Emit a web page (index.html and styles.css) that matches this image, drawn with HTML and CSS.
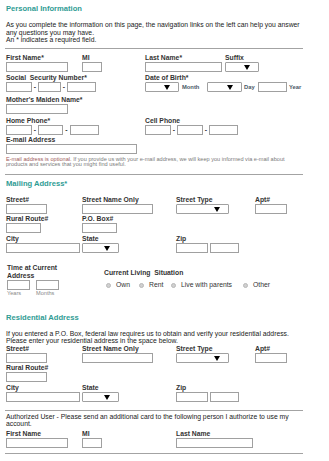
FILE: index.html
```html
<!DOCTYPE html>
<html lang="en">
<head>
  <meta charset="UTF-8">
  <meta name="viewport" content="width=device-width, initial-scale=1.0">
  <title>Personal Information</title>
  <link rel="stylesheet" href="styles.css">
</head>
<body>
  <div class="form-page">
    <h2 class="section-title">Personal Information</h2>
    <p class="intro">As you complete the information on this page, the navigation links on the left can help you answer<br>any questions you may have.<br>An * indicates a required field.</p>
    <hr class="rule rule-top">

    <!-- Nome -->
    <div class="row r-name">
      <div class="field col-a"><label>First Name*</label><input class="w62"></div>
      <div class="field col-b"><label>MI</label><input class="w20"></div>
      <div class="field col-c"><label>Last Name*</label><input class="w77"></div>
      <div class="field"><label>Suffix</label><div class="select w34"><i class="arrow"></i></div></div>
    </div>

    <div class="row r-ssn">
      <div class="field col-ab">
        <label>Social&nbsp; Security Number*</label>
        <div class="group">
          <input class="w26"><span class="dash">-</span><input class="w23"><span class="dash">-</span><input class="w29">
        </div>
      </div>
      <div class="field">
        <label>Date of Birth*</label>
        <div class="group">
          <div class="select w34"><i class="arrow"></i></div><span class="unit u-month">Month</span>
          <div class="select w35"><i class="arrow"></i></div><span class="unit u-day">Day</span>
          <input class="w29"><span class="unit u-year">Year</span>
        </div>
      </div>
    </div>

    <div class="row r-maiden">
      <div class="field"><label>Mother's Maiden Name*</label><input class="w62"></div>
    </div>

    <div class="row r-phone">
      <div class="field col-ab">
        <label>Home Phone*</label>
        <div class="group">
          <input class="w26"><span class="dash">-</span><input class="w25"><span class="dash d7">-</span><input class="w29">
        </div>
      </div>
      <div class="field">
        <label>Cell Phone</label>
        <div class="group">
          <input class="w26"><span class="dash">-</span><input class="w26"><span class="dash">-</span><input class="w29">
        </div>
      </div>
    </div>

    <div class="row r-email">
      <div class="field"><label>E-mail Address</label><input class="w131"></div>
    </div>
    <p class="note"><span class="note-lead">E-mail address is optional.</span> If you provide us with your e-mail address, we will keep you informed via e-mail about<br>products and services that you might find useful.</p>
    <hr class="rule rule-mail">

    <!-- Endereço de correspondência -->
    <h2 class="section-title t-mail">Mailing Address*</h2>
    <div class="row r-street">
      <div class="field col-a"><label>Street#</label><input class="w41"></div>
      <div class="field col-d"><label>Street Name Only</label><input class="w71"></div>
      <div class="field col-e"><label>Street Type</label><div class="select w53"><i class="arrow"></i></div></div>
      <div class="field"><label>Apt#</label><input class="w32"></div>
    </div>
    <div class="row r-rural">
      <div class="field col-a"><label>Rural Route#</label><input class="w35"></div>
      <div class="field"><label>P.O. Box#</label><input class="w35"></div>
    </div>
    <div class="row r-city">
      <div class="field col-a"><label>City</label><input class="w74"></div>
      <div class="field col-d"><label>State</label><div class="select w37"><i class="arrow"></i></div></div>
      <div class="field">
        <label>Zip</label>
        <div class="group zip"><input class="w32"><input class="w29"></div>
      </div>
    </div>

    <div class="row r-time">
      <div class="field col-time">
        <label class="two-line">Time at Current<br>Address</label>
        <div class="group years">
          <input class="w23"><input class="w23">
        </div>
        <div class="group hints"><span class="hint h-years">Years</span><span class="hint">Months</span></div>
      </div>
      <div class="field living">
        <label>Current Living&nbsp; Situation</label>
        <div class="radios">
          <span class="radio-opt o-own"><i class="radio"></i>Own</span>
          <span class="radio-opt o-rent"><i class="radio"></i>Rent</span>
          <span class="radio-opt o-live"><i class="radio"></i>Live with parents</span>
          <span class="radio-opt"><i class="radio"></i>Other</span>
        </div>
      </div>
    </div>

    <!-- Endereço residencial -->
    <h2 class="section-title t-res">Residential Address</h2>
    <p class="intro res-text">If you entered a P.O. Box, federal law requires us to obtain and verify your residential address.<br>Please enter your residential address in the space below.</p>
    <div class="row r-street2">
      <div class="field col-a"><label>Street#</label><input class="w41"></div>
      <div class="field col-d"><label>Street Name Only</label><input class="w71"></div>
      <div class="field col-e"><label>Street Type</label><div class="select w53"><i class="arrow"></i></div></div>
      <div class="field"><label>Apt#</label><input class="w32"></div>
    </div>
    <div class="row r-rural">
      <div class="field col-a"><label>Rural Route#</label><input class="w41"></div>
    </div>
    <div class="row r-city">
      <div class="field col-a"><label>City</label><input class="w74"></div>
      <div class="field col-d"><label>State</label><div class="select w37"><i class="arrow"></i></div></div>
      <div class="field">
        <label>Zip</label>
        <div class="group zip"><input class="w32"><input class="w29"></div>
      </div>
    </div>
    <hr class="rule rule-auth">

    <!-- Usuário autorizado -->
    <p class="intro auth-text">Authorized User - Please send an additional card to the following person I authorize to use my<br>account.</p>
    <div class="row r-auth">
      <div class="field col-a"><label>First Name</label><input class="w62"></div>
      <div class="field col-d"><label>MI</label><input class="w20"></div>
      <div class="field"><label>Last Name</label><input class="w77"></div>
    </div>
    <hr class="rule rule-end">
  </div>
</body>
</html>
```

FILE: styles.css
```css
body {
  margin: 0;
  font-family: "Liberation Sans", Arial, sans-serif;
  color: #333;
  background: #fff;
}

.form-page {
  width: 297px;
  padding: 4px 0 0 6px;
}

.section-title {
  margin: 0;
  font-size: 7.6px;
  line-height: 10px;
  font-weight: bold;
  color: #2f9c94;
}

.intro {
  margin: 7px 0 0;
  font-size: 6.8px;
  line-height: 7.5px;
  color: #222;
  white-space: nowrap;
}

.rule {
  height: 0;
  border: 0;
  border-top: 1px solid #a3a3a3;
  margin: 4px 0 0 -1px;
}

/* linhas do formulário */
.row {
  display: flex;
  align-items: flex-start;
}

.field label {
  display: block;
  font-size: 6.8px;
  font-weight: bold;
  line-height: 8px;
  white-space: nowrap;
  color: #333;
}

.field input {
  display: block;
  height: 10px;
  margin: 0;
  padding: 0;
  border: 1px solid #a0a0a0;
  box-sizing: border-box;
  background: #fff;
}

.select {
  display: flex;
  align-items: center;
  justify-content: flex-end;
  height: 10px;
  padding-right: 8px;
  border: 1px solid #a0a0a0;
  border-radius: 1px;
  box-sizing: border-box;
  background: #fff;
}

.arrow {
  width: 0;
  height: 0;
  border-left: 3px solid transparent;
  border-right: 3px solid transparent;
  border-top: 5px solid #000;
}

.group {
  display: flex;
  align-items: center;
}

.dash {
  width: 6px;
  text-align: center;
  font-size: 6.8px;
  font-weight: bold;
  line-height: 10px;
}

.dash.d7 {
  width: 7px;
}

.unit {
  font-size: 5.8px;
  font-weight: bold;
  color: #4a5866;
  line-height: 10px;
}

.u-month { width: 25px; padding-left: 3px; }
.u-day { width: 14px; padding-left: 2px; }
.u-year { padding-left: 2px; }

/* colunas */
.col-a { width: 76px; }
.col-b { width: 63px; }
.col-c { width: 80px; }
.col-ab { width: 139px; }
.col-d { width: 94px; }
.col-e { width: 79px; }

/* larguras dos campos */
.w20 { width: 20px; }
.w23 { width: 23px; }
.w25 { width: 25px; }
.w26 { width: 26px; }
.w29 { width: 29px; }
.w32 { width: 32px; }
.w34 { width: 34px; }
.w35 { width: 35px; }
.w37 { width: 37px; }
.w41 { width: 41px; }
.w53 { width: 53px; }
.w62 { width: 62px; }
.w71 { width: 71px; }
.w74 { width: 74px; }
.w77 { width: 77px; }
.w131 { width: 131px; }

.zip { gap: 2px; }

/* espaçamentos verticais */
.rule-top { margin-top: 4.5px; }
.r-name { margin-top: 5px; }
.r-ssn { margin-top: 2px; }
.r-maiden { margin-top: 4px; }
.r-phone { margin-top: 3px; }
.r-email { margin-top: 1px; }

.note {
  margin: 2.5px 0 0;
  font-size: 5.6px;
  line-height: 5.5px;
  color: #7a7a7a;
  white-space: nowrap;
}

.note-lead {
  color: #a05a5a;
}

.rule-mail { margin-top: 6.5px; }
.t-mail { margin-top: 4px; }
.r-street { margin-top: 7px; }
.r-rural { margin-top: 1px; }
.r-city { margin-top: 2px; }

.r-time { margin-top: 11px; }

.col-time {
  width: 97px;
  margin-left: 1px;
}

.years { gap: 6px; }

.hints {
  font-size: 5.6px;
  line-height: 6px;
  color: #888;
}

.h-years { width: 29px; }

.living {
  padding-top: 5px;
}

.radios {
  display: flex;
  align-items: center;
  margin-top: 4px;
  padding-left: 1.5px;
  font-size: 6.8px;
  line-height: 8px;
  color: #333;
}

.radio-opt {
  display: flex;
  align-items: center;
}

.o-own { width: 33px; }
.o-rent { width: 32px; }
.o-live { width: 72px; }

.radio {
  width: 5px;
  height: 5px;
  margin-right: 5.5px;
  border-radius: 50%;
  background: #d0d0d0;
  border: 0.5px solid #b8b8b8;
  box-sizing: border-box;
}

.t-res { margin-top: 17px; }

.res-text {
  margin-top: 7px;
  line-height: 7px;
}

.r-street2 { margin-top: 1px; }

.rule-auth { margin-top: 8px; }

.auth-text {
  margin-top: 3px;
  line-height: 6.5px;
}

.r-auth { margin-top: 3px; }
.rule-end { margin-top: 5px; }
```
